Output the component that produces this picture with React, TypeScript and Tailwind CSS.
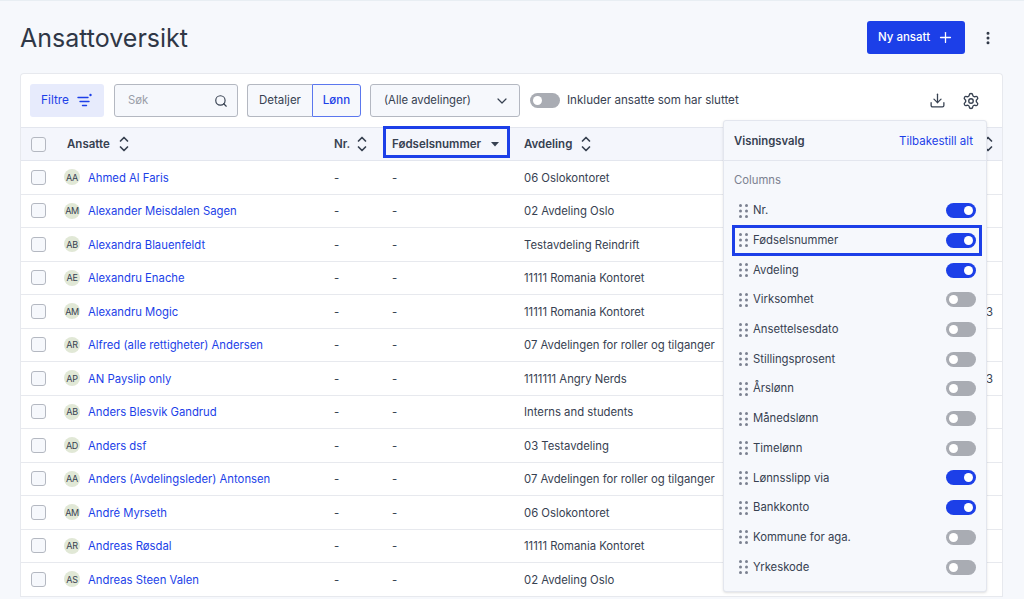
import React from "react";
import { ChevronDown, Search, Plus, EllipsisVertical, Download, Settings } from "lucide-react";

const rows: [string, string, string, string?][] = [
  ["AA", "Ahmed Al Faris", "06 Oslokontoret"],
  ["AM", "Alexander Meisdalen Sagen", "02 Avdeling Oslo"],
  ["AB", "Alexandra Blauenfeldt", "Testavdeling Reindrift"],
  ["AE", "Alexandru Enache", "11111 Romania Kontoret"],
  ["AM", "Alexandru Mogic", "11111 Romania Kontoret", "3"],
  ["AR", "Alfred (alle rettigheter) Andersen", "07 Avdelingen for roller og tilganger"],
  ["AP", "AN Payslip only", "1111111 Angry Nerds", "3"],
  ["AB", "Anders Blesvik Gandrud", "Interns and students"],
  ["AD", "Anders dsf", "03 Testavdeling"],
  ["AA", "Anders (Avdelingsleder) Antonsen", "07 Avdelingen for roller og tilganger"],
  ["AM", "André Myrseth", "06 Oslokontoret"],
  ["AR", "Andreas Røsdal", "11111 Romania Kontoret"],
  ["AS", "Andreas Steen Valen", "02 Avdeling Oslo"],
];

const cols: [string, boolean, boolean?][] = [
  ["Nr.", true],
  ["Fødselsnummer", true, true],
  ["Avdeling", true],
  ["Virksomhet", false],
  ["Ansettelsesdato", false],
  ["Stillingsprosent", false],
  ["Årslønn", false],
  ["Månedslønn", false],
  ["Timelønn", false],
  ["Lønnsslipp via", true],
  ["Bankkonto", true],
  ["Kommune for aga.", false],
  ["Yrkeskode", false],
];

function SortIcon() {
  return (
    <svg width="10" height="16" viewBox="0 0 10 16" fill="none" stroke="#374151" strokeWidth="1.7" strokeLinecap="round" strokeLinejoin="round">
      <path d="M1.5 5 5 1.5 8.5 5" />
      <path d="M1.5 11 5 14.5 8.5 11" />
    </svg>
  );
}

function Grip() {
  return (
    <svg width="9" height="14" viewBox="0 0 9 14" fill="#7b8190">
      {[1.5, 7, 12.5].map((y) => [1.5, 7.5].map((x) => <circle key={`${x}-${y}`} cx={x} cy={y} r="1.5" />))}
    </svg>
  );
}

function Toggle({ on }: { on: boolean }) {
  return (
    <span className={`flex h-[15px] w-[30px] shrink-0 items-center rounded-full px-[3px] ${on ? "justify-end bg-[#1c3fe8]" : "justify-start bg-[#a9acb3]"}`}>
      <span className="h-[9px] w-[9px] rounded-full bg-white" />
    </span>
  );
}

function Check() {
  return <span className="block h-[15px] w-[15px] rounded-[3px] border border-[#b4b8c1] bg-[#f6f8fc]" />;
}

function FilterIcon() {
  return (
    <svg width="16" height="15" viewBox="0 0 16 15" fill="none" stroke="#1c3fe8" strokeWidth="1.4" strokeLinecap="round">
      <path d="M1 4.5h10M3 8.5h9M5.5 12.5h4" />
      <circle cx="13.5" cy="2" r="1.2" fill="#1c3fe8" stroke="none" />
    </svg>
  );
}

export default function App() {
  return (
    <div className="h-[599px] w-[1024px] overflow-hidden border-t border-t-[#e8eef3] bg-[#f6f8fc] font-['Inter','Liberation_Sans',sans-serif] text-[11.3px] text-[#374151]">
      <header className="flex h-[72px] items-center justify-between pl-5 pr-[28px] pt-[1px]">
        <h1 className="text-[25px] leading-8 text-[#2f3746]">Ansattoversikt</h1>
        <div className="flex items-center gap-[15px]">
          <button className="flex h-[33px] w-[98px] items-center justify-center gap-[7px] rounded-[3px] bg-[#1c3fe8] text-[11.5px] font-medium text-white">
            Ny ansatt
            <Plus size={17} strokeWidth={1.8} />
          </button>
          <EllipsisVertical size={16} strokeWidth={2.5} className="text-[#2f3746]" />
        </div>
      </header>

      <main className="relative ml-5 w-[983px] rounded-t-[4px] border border-b-0 border-[#e7e9ee] bg-white">
        <div className="flex h-[53px] items-center pl-[9px] pr-[22px]">
          <button className="flex h-[33px] w-[74px] items-center justify-center gap-[8px] rounded-[3px] bg-[#e7ebfc] text-[11.8px] text-[#1c3fe8]">
            Filtre
            <FilterIcon />
          </button>
          <div className="ml-[10px] flex h-[33px] w-[124px] items-center justify-between rounded-[3px] border border-[#b4b8c1] bg-[#f6f8fc] pl-[13px] pr-[9px] text-[#9a9ea8]">
            Søk
            <Search size={14} strokeWidth={2} className="text-[#374151]" />
          </div>
          <div className="ml-[9px] flex h-[33px] w-[114px] text-[11.5px]">
            <span className="flex flex-1 items-center justify-center rounded-l-[3px] border border-r-0 border-[#b4b8c1] bg-[#f6f8fc]">Detaljer</span>
            <span className="flex w-[49px] items-center justify-center rounded-r-[3px] border border-[#5b77ee] bg-[#f6f8fc] font-medium text-[#1c3fe8]">Lønn</span>
          </div>
          <div className="ml-[9px] flex h-[33px] w-[150px] items-center justify-between rounded-[3px] border border-[#b4b8c1] bg-[#f6f8fc] pl-[13px] pr-[9px]">
            (Alle avdelinger)
            <ChevronDown size={16} strokeWidth={1.8} />
          </div>
          <span className="ml-[10px]"><Toggle on={false} /></span>
          <span className="ml-[7px] text-[11.6px]">Inkluder ansatte som har sluttet</span>
          <div className="ml-auto flex items-center gap-[16px]">
            <Download size={17} strokeWidth={1.8} />
            <Settings size={18} strokeWidth={1.8} />
          </div>
        </div>

        <div className="flex h-[34px] items-center border-y border-[#e3e6ee] bg-[#f4f6fc] text-[11.5px] font-semibold">
          <span className="ml-[10px] w-[36px]"><Check /></span>
          <span className="flex w-[267px] items-center gap-[9px]"><span className="pt-[2px]">Ansatte</span> <SortIcon /></span>
          <span className="flex w-[49px] items-center gap-[7px]"><span className="pt-[2px]">Nr.</span> <SortIcon /></span>
          <span className="-mt-[4px] flex h-[32px] w-[127px] items-center justify-between border-[3px] border-[#1c3fe8] pl-[6px] pr-[8px] pt-[5px]">
            Fødselsnummer
            <svg width="8" height="5" viewBox="0 0 8 5" fill="#374151"><path d="M0 0h8L4 4.5z" /></svg>
          </span>
          <span className="ml-[14px] flex w-[459px] items-center gap-[9px]"><span className="pt-[2px]">Avdeling</span> <SortIcon /></span>
          <SortIcon />
        </div>

        {rows.map(([init, name, dept, extra], i) => (
          <div key={i} className="flex h-[33.5px] items-center border-b border-[#e7e9ee]">
            <span className="ml-[10px] w-[33px]"><Check /></span>
            <span className="flex w-[270px] items-center gap-[8px]">
              <span className="flex h-[16px] w-[16px] items-center justify-center rounded-full bg-[#e1e8d6] text-[9px] tracking-[-0.3px]">{init}</span>
              <span className="pt-[2px] text-[#1c3fe8]">{name}</span>
            </span>
            <span className="w-[58px] pt-[2px]">-</span>
            <span className="w-[132px] pt-[2px]">-</span>
            <span className="w-[460px] pt-[2px]">{dept}</span>
            <span className="ml-[2px] pt-[2px]">{extra}</span>
          </div>
        ))}

        <aside className="absolute left-[702px] top-[46px] w-[264px] rounded-[3px] border border-[#e3e6ee] bg-[#f6f8fc] shadow-sm">
          <div className="flex h-[40px] items-center justify-between border-b border-[#e3e6ee] pl-[10px] pr-[13px] pt-[2px]">
            <span className="font-semibold">Visningsvalg</span>
            <span className="text-[11.5px] text-[#1c3fe8]">Tilbakestill alt</span>
          </div>
          <div className="pl-[10px] pt-[11px] text-[#7b8190]">Columns</div>
          <ul className="mb-[9px] mt-[7px] px-[9px]">
            {cols.map(([label, on, hl]) => (
              <li
                key={label}
                className={`flex items-center gap-[5px] ${hl ? "-my-[1px] -ml-[1px] -mr-[5px] h-[31.7px] border-[3px] border-[#1c3fe8] pl-[4px] pr-[3px]" : "h-[29.7px] pl-[6px] pr-[1px]"}`}
              >
                <Grip />
                <span className="flex-1">{label}</span>
                <Toggle on={on} />
              </li>
            ))}
          </ul>
        </aside>
      </main>
    </div>
  );
}
